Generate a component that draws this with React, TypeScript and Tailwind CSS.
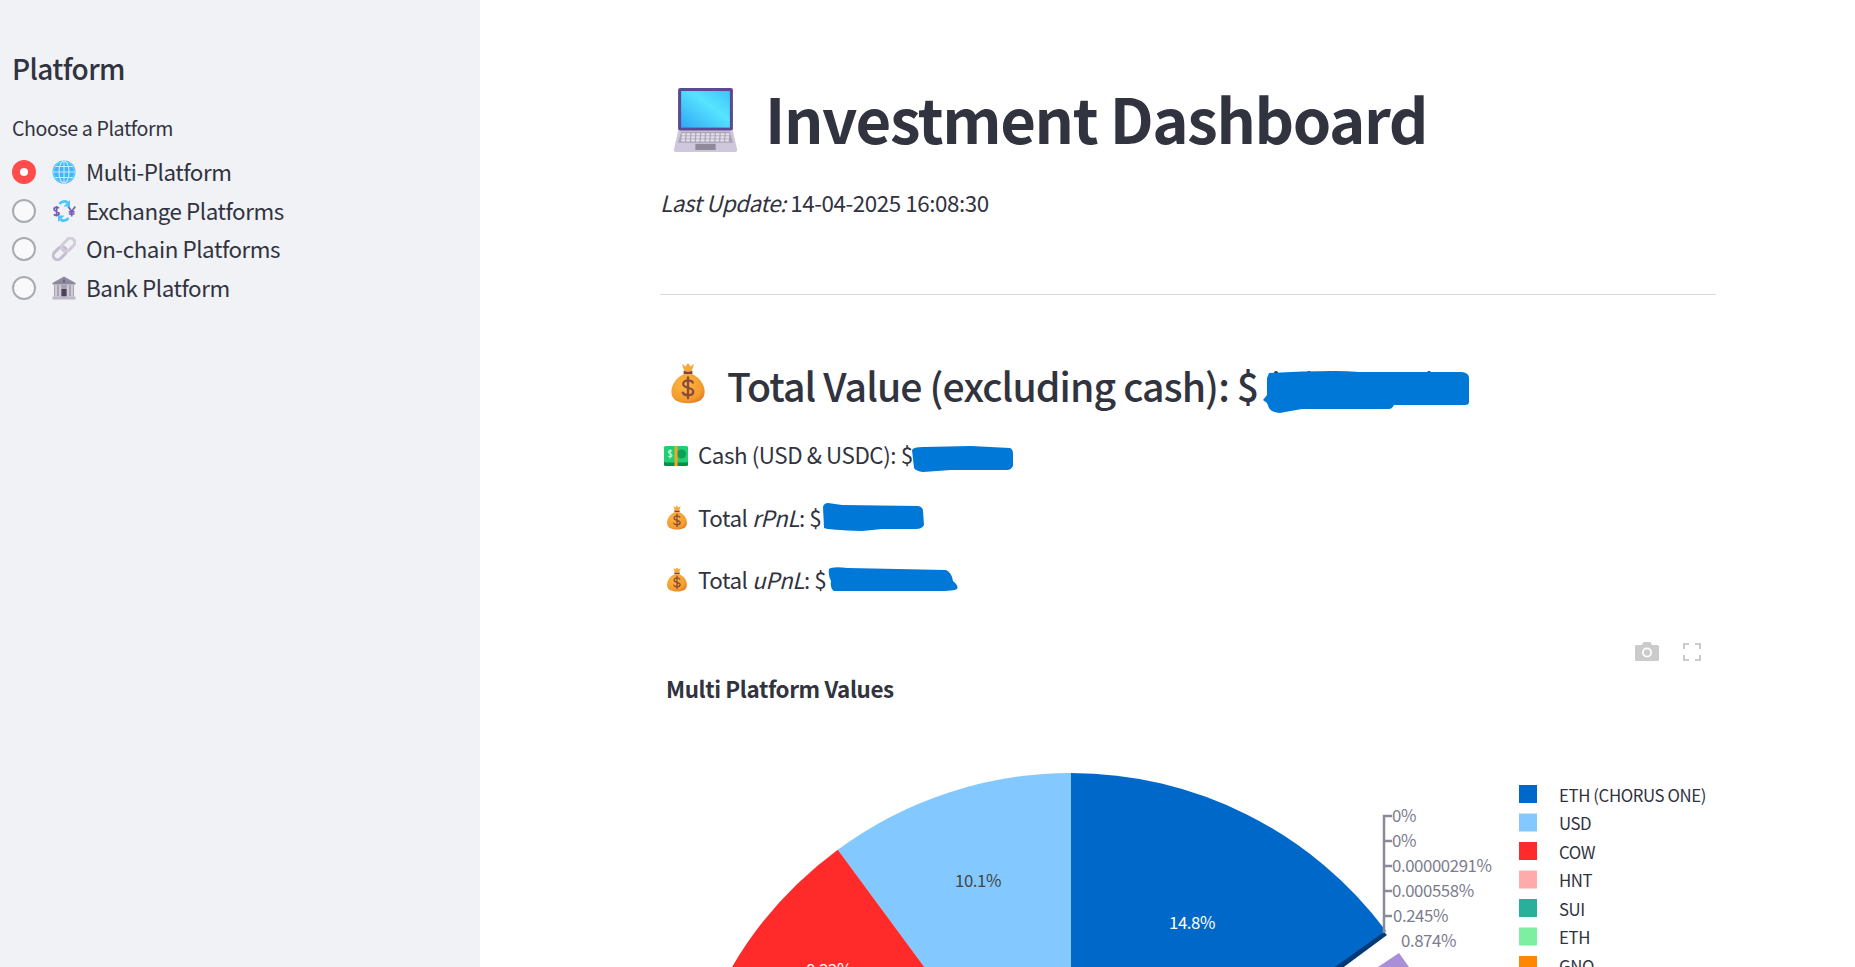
import React from "react";

function Laptop({ className }: { className: string }) {
  return (
    <svg viewBox="0 0 64 64" className={className}>
      <defs>
        <linearGradient id="scr" x1="0" y1="1" x2="1" y2="0">
          <stop offset="0" stopColor="#2fa8f5" />
          <stop offset="0.6" stopColor="#56e4ff" />
          <stop offset="1" stopColor="#3fc4f8" />
        </linearGradient>
      </defs>
      <rect x="5" y="0" width="54" height="42" rx="2" fill="#5b4a92" />
      <rect x="8" y="3" width="48" height="36" fill="url(#scr)" />
      <path d="M5 42H59L63 60a2 2 0 0 1-2 3H3a2 2 0 0 1-2-3Z" fill="#cfc8dc" />
      <path d="M8 43H56L59 54H5Z" fill="#aaa4b6" />
      {[0, 1, 2].map((r) =>
        Array.from({ length: 10 }).map((_, c) => (
          <rect key={`${r}-${c}`} x={8.6 + c * 4.8 - r * 0.2} y={44.5 + r * 3} width="3.6" height="2.2" fill="#e4e0ea" />
        ))
      )}
      <rect x="22" y="55" width="20" height="6" fill="#8e8a99" />
    </svg>
  );
}

function Bag({ className }: { className: string }) {
  return (
    <svg viewBox="0 0 40 48" className={className}>
      <defs>
        <radialGradient id="bag" cx="0.4" cy="0.35" r="0.8">
          <stop offset="0" stopColor="#fdb743" />
          <stop offset="0.7" stopColor="#f39a2c" />
          <stop offset="1" stopColor="#d56a2a" />
        </radialGradient>
      </defs>
      <path d="M13 2l4 3 3-4 3 4 4-3-3 9H16Z" fill="#f9a83a" />
      <path d="M15 10q5 2 10 0v4H15Z" fill="#7d4533" />
      <path d="M15 14C8 17 1 25 1 34c0 9 7 13 19 13s19-4 19-13c0-9-7-17-14-20Z" fill="url(#bag)" />
      <path d="M25.5 23.5c-1-2-3-2.500-5.500-2.500-3 0-5.500 1.500-5.500 4.200 0 5.500 11.500 3 11.500 8.500 0 2.800-2.500 4.300-6 4.300-2.700 0-5-1-6-3M20 17.500v24" fill="none" stroke="#8c4a3a" strokeWidth="2.600" strokeLinecap="round" />
    </svg>
  );
}

function Cash({ className }: { className: string }) {
  return (
    <svg viewBox="0 0 24 20" className={className}>
      <rect x="0" y="1" width="24" height="19" rx="1.500" fill="#0c8a4e" />
      <rect x="0" y="0" width="24" height="16.500" rx="1.500" fill="#1fcf72" />
      <circle cx="17.500" cy="8" r="4.500" fill="#0f9d58" />
      <path d="M7.800 5.200c-.5-.9-3.300-1-3.300.8 0 2 3.500 1.300 3.500 3.400 0 1.700-3 1.700-3.700.6M6.200 3.500v9" fill="none" stroke="#c8f7d8" strokeWidth="1.100" />
      <rect x="10.500" y="0" width="3" height="20" fill="#f6a623" />
    </svg>
  );
}

function Globe({ className }: { className: string }) {
  return (
    <svg viewBox="0 0 24 24" className={className} fill="none">
      <circle cx="12" cy="12" r="11.500" fill="#43b4f8" />
      <g stroke="#c6ecfe" strokeWidth="1.100">
        <circle cx="12" cy="12" r="10.500" stroke="#6fd0fb" />
        <ellipse cx="12" cy="12" rx="5" ry="11" />
        <path d="M12 1v22M1 12h22M3 6.500h18M3 17.500h18" />
      </g>
    </svg>
  );
}

function Exchange({ className }: { className: string }) {
  return (
    <svg viewBox="0 0 24 24" className={className} fill="none">
      <path d="M7.500 5C9.500 2.300 13 1.800 15.500 3.500" stroke="#4cc6fb" strokeWidth="2.800" />
      <path d="M18 1v6.500h-6.500Z" fill="#4cc6fb" />
      <path d="M16.500 19C14.500 21.700 11 22.200 8.500 20.500" stroke="#4cc6fb" strokeWidth="2.800" />
      <path d="M6 23v-6.500h6.500Z" fill="#4cc6fb" />
      <path d="M6.800 9.300c-.8-1.300-4.800-1.300-4.800 1 0 2.700 5.200 1.600 5.200 4.300 0 2.100-4.300 2.200-5.300.6M4.600 7v10.500" stroke="#7360b5" strokeWidth="1.700" />
      <path d="M16.200 7.500l3.500 5 3.500-5M19.700 12v5.500M16.800 12.800h5.800M16.800 15h5.800" stroke="#7360b5" strokeWidth="1.700" />
    </svg>
  );
}

function Chain({ className }: { className: string }) {
  return (
    <svg viewBox="0 0 24 24" className={className} fill="none">
      <rect x="-8.500" y="-4.300" width="15" height="8.600" rx="4.300" transform="translate(8.500 15.500) rotate(-45)" stroke="#c5bccf" strokeWidth="3" />
      <rect x="-6.500" y="-4.300" width="15" height="8.600" rx="4.300" transform="translate(15.500 8.500) rotate(-45)" stroke="#d3cbdc" strokeWidth="3" />
    </svg>
  );
}

function Bank({ className }: { className: string }) {
  return (
    <svg viewBox="0 0 24 24" className={className}>
      <path d="M12 0.500L23.500 7v1.500H.5V7Z" fill="#8f8a99" />
      <path d="M12 3l1.300 2.200L12 7.500l-1.300-2.300Z" fill="#6b57a8" />
      <rect x="2" y="8.500" width="20" height="12" fill="#a9a4b2" />
      {[3, 7, 15, 19].map((x) => (
        <rect key={x} x={x} y="9" width="2" height="11" fill="#cfcad6" />
      ))}
      <rect x="9.500" y="13" width="5" height="7.500" fill="#4a4458" />
      <rect x="0.500" y="20.500" width="23" height="3" fill="#bdb8c6" />
    </svg>
  );
}

function Blob({ d, w, h, className, children }: { d: string; w: number; h: number; className: string; children?: React.ReactNode }) {
  return (
    <svg viewBox={`0 0 ${w} ${h}`} width={w} height={h} className={className}>
      {children}
      <path d={d} fill="#0078d7" />
    </svg>
  );
}

function wedge(a0: number, a1: number) {
  const cx = 1071, cy = 1166, r = 393;
  const p = (a: number) => {
    const t = (a * Math.PI) / 180;
    return `${(cx + r * Math.sin(t)).toFixed(1)} ${(cy - r * Math.cos(t)).toFixed(1)}`;
  };
  return `M${cx} ${cy}L${p(a0)}A${r} ${r} 0 0 ${a1 > a0 ? 1 : 0} ${p(a1)}Z`;
}

const legend: [string, string][] = [
  ["ETH (CHORUS ONE)", "#0068c9"],
  ["USD", "#83c9ff"],
  ["COW", "#ff2b2b"],
  ["HNT", "#ffabab"],
  ["SUI", "#29b09d"],
  ["ETH", "#7defa1"],
  ["GNO", "#ff8700"],
];

const ticks: [string, number, number][] = [
  ["0%", 1392, 816],
  ["0%", 1392, 841],
  ["0.00000291%", 1392, 866],
  ["0.000558%", 1392, 891],
  ["0.245%", 1393, 916],
  ["0.874%", 1401, 941],
];

const radios = [
  { label: "Multi-Platform", Icon: Globe, on: true },
  { label: "Exchange Platforms", Icon: Exchange, on: false },
  { label: "On-chain Platforms", Icon: Chain, on: false },
  { label: "Bank Platform", Icon: Bank, on: false },
];

function Chart() {
  return (
    <div className="relative mt-[31px] h-[342px] w-[1056px]">
      <svg viewBox="660 625 1056 342" width={1056} height={342} className="block tracking-[-0.4px]">
        <text x="666" y="698" fontSize="22.4" fontWeight="700" fill="#31333f">Multi Platform Values</text>
        <path d={wedge(0, 53.28)} fill="#0068c9" />
        <path d={wedge(0, -36.4)} fill="#83c9ff" />
        <path d={wedge(-36.4, -66)} fill="#ff2b2b" />
        <path d="M1384 932L1387 935L1337 972L1328 972Z" fill="#013a75" />
        <path d="M1399 953L1409 967H1378Z" fill="#a88fd8" />
        <text x="1192" y="929" fontSize="16.8" fill="#fff" textAnchor="middle">14.8%</text>
        <text x="978" y="887" fontSize="16.8" fill="#444" textAnchor="middle">10.1%</text>
        <text x="829" y="976" fontSize="16.8" fill="#fff" textAnchor="middle">8.22%</text>
        <path d="M1392 816H1384V933M1384 841H1392M1384 866H1392M1384 891H1392M1384 916H1392" fill="none" stroke="#8a8a9a" strokeWidth="2.500" />
        {ticks.map(([t, x, y], i) => (
          <text key={i} x={x} y={y + 6} fontSize="16.8" fill="#7c7c8e">{t}</text>
        ))}
        {legend.map(([t, c], i) => (
          <g key={t}>
            <rect x="1519" y={785 + i * 28.5} width="18" height="18" fill={c} />
            <text x="1559" y={801.5 + i * 28.5} fontSize="16.8" fill="#31333f">{t}</text>
          </g>
        ))}
      </svg>
      <div className="absolute right-[15px] top-[17px] flex items-center gap-[24px]">
        <svg viewBox="0 0 24 19" width={24} height={19}>
          <path d="M1.500 3H7L8.500 0h7L17 3h5.500A1.500 1.500 0 0 1 24 4.500v13a1.500 1.500 0 0 1-1.500 1.500h-21A1.500 1.500 0 0 1 0 17.500v-13A1.500 1.500 0 0 1 1.500 3Z" fill="#cbcbcb" />
          <circle cx="12" cy="10.500" r="5" fill="#fff" />
          <circle cx="12" cy="10.500" r="3.200" fill="#cbcbcb" />
        </svg>
        <svg viewBox="0 0 18 18" width={18} height={18} fill="none" stroke="#cbcbcb" strokeWidth="2.200">
          <path d="M1 6V1h5M12 1h5v5M17 12v5h-5M6 17H1v-5" />
        </svg>
      </div>
    </div>
  );
}

export default function App() {
  return (
    <div className="flex h-screen w-full overflow-hidden bg-white text-[#31333f] [font-family:'Noto_Sans_CJK_SC','Noto_Sans',sans-serif]">
      <aside className="w-[480px] shrink-0 bg-[#f0f2f6] px-3 pt-[48px]">
        <h2 className="text-[28px] font-medium leading-[40px] tracking-[-0.6px]">Platform</h2>
        <p className="mt-[26px] text-[19.6px] leading-[28px] tracking-[-0.4px]">Choose a Platform</p>
        <div className="mt-[10px] flex flex-col">
          {radios.map(({ label, Icon, on }) => (
            <div key={label} className="flex h-[38.500px] items-center">
              <div className="mt-[2px] flex items-center">
                {on ? (
                  <span className="flex h-6 w-6 items-center justify-center rounded-full bg-[#ff4b4b]">
                    <span className="h-2 w-2 rounded-full bg-white" />
                  </span>
                ) : (
                  <span className="h-6 w-6 rounded-full border-2 border-[#a9abb3] bg-[#f9f9fb]" />
                )}
                <Icon className="ml-4 h-6 w-6" />
              </div>
              <span className="ml-[10px] text-[22.400px] leading-[30px] tracking-[-0.45px]">{label}</span>
            </div>
          ))}
        </div>
      </aside>
      <main className="min-w-0 flex-1 pl-[180px] pt-[80px]">
        <div className="w-[1056px]">
          <div className="flex h-[80px] items-center pl-[13px]">
            <Laptop className="h-[65px] w-[65px]" />
            <h1 className="mb-[5px] ml-[27px] whitespace-nowrap text-[61.600px] font-bold leading-[80px] tracking-[-1.4px]">Investment Dashboard</h1>
          </div>
          <p className="mt-[27px] h-[30px] text-[22.400px] leading-[30px] tracking-[-0.45px]"><em>Last Update:</em> 14-04-2025 16:08:30</p>
          <hr className="mt-[77px] border-t border-[#d9d9d9]" />
          <div className="mt-[65px] flex h-[50px] items-center pl-[9px]">
            <Bag className="mb-[4px] h-[42px] w-[38px]" />
            <h3 className="ml-[20px] whitespace-nowrap text-[39.200px] font-medium leading-[50px] tracking-[-0.9px]">Total Value (excluding cash): $</h3>
            <Blob className="ml-[4px] mt-[14px]" w={208} h={44} d="M7 3Q40 1 73 1Q85 1 97 2L200 2Q207 3 207 8L207 32Q207 35 203 35L132 35Q130 39 127 39L40 39Q28 41 18 43Q9 42 7 38L5 33L1 30L5 25L5 8Z">
              <circle cx="14" cy="3" r="2" fill="#31333f" />
              <circle cx="47" cy="3" r="2" fill="#31333f" />
              <circle cx="67" cy="3" r="2" fill="#31333f" />
              <circle cx="167" cy="3" r="2" fill="#31333f" />
            </Blob>
          </div>
          <div className="mt-[29px] flex h-[30px] items-center pl-[4px] text-[22.400px] leading-[30px] tracking-[-0.45px]">
            <Cash className="mt-[4px] h-[20px] w-[24px]" />
            <span className="ml-[10px] whitespace-nowrap">Cash (USD &amp; USDC): $</span>
            <Blob className="-ml-[2px] mt-[9px]" w={102} h={26} d="M1 4Q2 1 12 1L60 0L99 2Q102 3 102 8L102 20Q100 24 96 24L40 24L12 26Q5 25 3 22Z" />
          </div>
          <div className="mt-[33px] flex h-[30px] items-center pl-[6px] text-[22.400px] leading-[30px] tracking-[-0.45px]">
            <Bag className="h-[25px] w-[22px]" />
            <span className="ml-[10px] whitespace-nowrap">Total <em>rPnL</em>: $</span>
            <Blob className="ml-[1px]" w={102} h={28} d="M1 4Q2 0 6 0L20 2L96 3Q101 4 101 8L102 22Q100 26 94 26L60 26L40 28Q6 27 2 25Z" />
          </div>
          <div className="mt-[32px] flex h-[30px] items-center pl-[6px] text-[22.400px] leading-[30px] tracking-[-0.45px]">
            <Bag className="h-[25px] w-[22px]" />
            <span className="ml-[10px] whitespace-nowrap">Total <em>uPnL</em>: $</span>
            <Blob className="ml-[2px]" w={131} h={24} d="M1 2Q4 -1 20 1L118 3Q124 6 125 14Q131 19 129 22Q126 24 110 24L6 24Q2 22 3 14Q0 8 1 2Z" />
          </div>
          <Chart />
        </div>
      </main>
    </div>
  );
}
